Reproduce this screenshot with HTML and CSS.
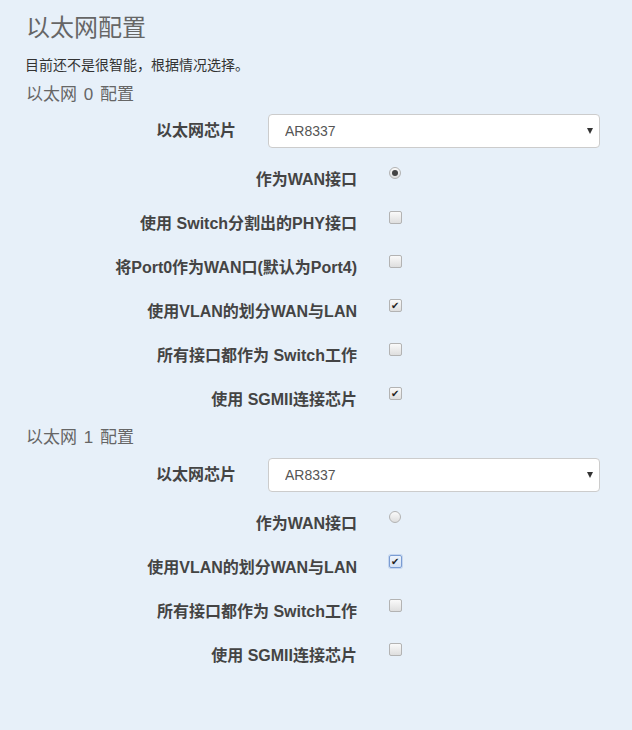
FILE: index.html
```html
<!DOCTYPE html>
<html lang="zh-CN">
<head>
  <meta charset="UTF-8" />
  <meta name="viewport" content="width=device-width, initial-scale=1.0"/>
  <title>以太网配置</title>
  <link rel="stylesheet" href="styles.css">
</head>
<body>

<div class="page">
  <h3 class="page-title">以太网配置</h3>
  <p class="hint">目前还不是很智能，根据情况选择。</p>

  <form class="eth-form">
    <h4 class="group-title">以太网 0 配置</h4>
    <div class="row select-row">
      <label for="chip0">以太网芯片</label>
      <div class="select-wrap">
        <select id="chip0">
          <option>AR8337</option>
        </select>
      </div>
    </div>
    <div class="row">
      <label>作为WAN接口</label>
      <div><input type="radio" name="wan0" checked /></div>
    </div>
    <div class="row">
      <label>使用 Switch分割出的PHY接口</label>
      <div><input type="checkbox" /></div>
    </div>
    <div class="row">
      <label>将Port0作为WAN口(默认为Port4)</label>
      <div><input type="checkbox" /></div>
    </div>
    <div class="row">
      <label>使用VLAN的划分WAN与LAN</label>
      <div><input type="checkbox" checked /></div>
    </div>
    <div class="row">
      <label>所有接口都作为 Switch工作</label>
      <div><input type="checkbox" /></div>
    </div>
    <div class="row">
      <label>使用 SGMII连接芯片</label>
      <div><input type="checkbox" checked /></div>
    </div>

    <h4 class="group-title">以太网 1 配置</h4>
    <div class="row select-row">
      <label for="chip1">以太网芯片</label>
      <div class="select-wrap">
        <select id="chip1">
          <option>AR8337</option>
        </select>
      </div>
    </div>
    <div class="row">
      <label>作为WAN接口</label>
      <div><input type="radio" name="wan1" /></div>
    </div>
    <div class="row">
      <label>使用VLAN的划分WAN与LAN</label>
      <div><input type="checkbox" class="focused" checked /></div>
    </div>
    <div class="row">
      <label>所有接口都作为 Switch工作</label>
      <div><input type="checkbox" /></div>
    </div>
    <div class="row">
      <label>使用 SGMII连接芯片</label>
      <div><input type="checkbox" /></div>
    </div>
  </form>
</div>

</body>
</html>
```

FILE: styles.css
```css
body {
  font-family: "Liberation Sans", "Noto Sans CJK SC", sans-serif;
  background-color: #e7f0f9;
  color: #333;
  margin: 0;
}
.page {
  padding: 12px 26px 40px;
}
.page-title {
  font-size: 24px;
  font-weight: normal;
  line-height: 32px;
  color: #666;
  margin: 0;
}
.hint {
  font-size: 14px;
  line-height: 20px;
  margin: 11px 0 9px -1px;
}
.group-title {
  font-size: 17px;
  font-weight: normal;
  line-height: 22px;
  color: #666;
  margin: 0 0 8px;
  word-spacing: 2px;
}
.row + .group-title {
  margin-top: 5px;
  margin-bottom: 9px;
}
.row {
  display: grid;
  grid-template-columns: 331px auto;
  column-gap: 32px;
  height: 44px;
}
.row label {
  text-align: right;
  font-size: 16px;
  font-weight: bold;
  line-height: 20px;
  padding-top: 12px;
  color: #444;
  white-space: nowrap;
}
.select-row {
  grid-template-columns: 210px 332px;
  height: 34px;
  margin-bottom: 10px;
}
.select-row label {
  padding-top: 7px;
}
.select-wrap {
  position: relative;
}
.select-wrap::after {
  content: "";
  position: absolute;
  right: 7px;
  top: 14px;
  border-left: 3px solid transparent;
  border-right: 3px solid transparent;
  border-top: 6px solid #333;
}
select {
  appearance: none;
  width: 100%;
  height: 34px;
  padding: 0 16px;
  font-family: inherit;
  font-size: 14px;
  color: #555;
  background: white;
  border: 1px solid #ccc;
  border-radius: 4px;
}
input[type="checkbox"],
input[type="radio"] {
  appearance: none;
  position: relative;
  width: 13px;
  height: 13px;
  margin: 9px 0 0;
  border: 1px solid #b3b3b3;
  background: linear-gradient(#fafafa, #dedede);
}
input[type="checkbox"] {
  border-radius: 2px;
}
input[type="radio"] {
  border-radius: 50%;
  width: 12px;
  height: 12px;
}
input[type="radio"]:checked::after {
  content: "";
  position: absolute;
  left: 2px;
  top: 2px;
  width: 6px;
  height: 6px;
  border-radius: 50%;
  background: #444;
}
input[type="checkbox"]:checked::after {
  content: "✔";
  position: absolute;
  left: 1px;
  top: -1px;
  font-size: 10px;
  line-height: 13px;
  color: #222;
}
input.focused {
  border-color: #7a9cd3;
  background: linear-gradient(#eef4fc, #d3e1f5);
  box-shadow: 0 0 0 1px #c5d6ef;
}
```
